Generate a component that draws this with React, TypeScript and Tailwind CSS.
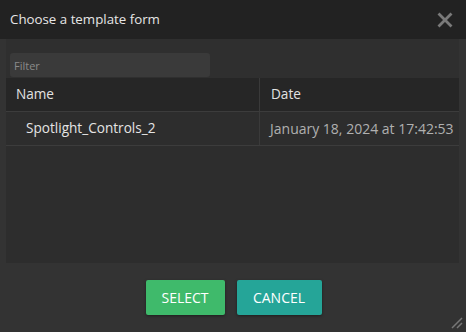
import { useState } from "react";

const rows = [{ name: "Spotlight_Controls_2", date: "January 18, 2024 at 17:42:53" }];

const App = () => {
  const [filter, setFilter] = useState("");
  return (
    <div className="w-[466px] h-[332px] bg-[#333333] flex flex-col font-['Open_Sans',sans-serif] text-[13px] text-[#dddddd] relative overflow-hidden">
      <div className="h-[39px] bg-[#222222] flex items-center justify-between pl-[10px] pr-[13px] shrink-0">
        <span className="text-[#e6e6e6] text-[13.3px]">Choose a template form</span>
        <svg width="16" height="16" viewBox="0 0 16 16" className="text-[#7a7a7a]">
          <path d="M2.5 2.5 L13.5 13.5 M13.5 2.5 L2.5 13.5" stroke="currentColor" strokeWidth="2.8" strokeLinecap="square" />
        </svg>
      </div>
      <div className="mx-[6px] mr-[7px] h-[224px] bg-[#2d2d2d] flex flex-col">
        <div className="bg-[#2f2f2f] pt-[14px] pb-[1px] pl-[4px]">
          <input
            value={filter}
            onChange={(e) => setFilter(e.target.value)}
            placeholder="Filter"
            className="w-[200px] h-[24px] bg-[#3a3a3a] rounded-[3px] px-[4px] text-[11px] text-[#ccc] placeholder:text-[#8a8a8a] outline-none"
          />
        </div>
        <div className="flex h-[34px] bg-[#262626] border-b border-[#3c3c3c] text-[13.6px]">
          <div className="w-[253px] flex items-center pl-[10px] text-[#e2e2e2]">Name</div>
          <div className="flex-1 flex items-center pl-[11px] border-l border-[#3a3a3a] text-[#e2e2e2]">Date</div>
        </div>
        {rows.map((r) => (
          <div key={r.name} className="flex h-[34px] border-b border-[#3c3c3c]">
            <div className="w-[253px] flex items-center pl-[20px] text-[#e4e4e4] text-[13.6px]">{r.name}</div>
            <div className="flex-1 flex items-center pl-[10px] border-l border-[#3a3a3a] text-[#b0b0b0] text-[14px] whitespace-nowrap">{r.date}</div>
          </div>
        ))}
      </div>
      <div className="flex justify-center gap-[12px] pt-[17px] pl-[1px]">
        <button className="w-[79px] h-[35px] rounded-[2px] bg-[#3fba6b] text-white text-[14px] shadow-[0_1px_3px_rgba(0,0,0,0.4)]">
          SELECT
        </button>
        <button className="w-[85px] h-[35px] rounded-[2px] bg-[#25a598] text-white text-[14px] shadow-[0_1px_3px_rgba(0,0,0,0.4)]">
          CANCEL
        </button>
      </div>
      <svg width="14" height="14" viewBox="0 0 14 14" className="absolute right-[3px] bottom-[3px] text-[#777]">
        <path d="M13 3 L3 13 M13 8 L8 13" stroke="currentColor" strokeWidth="1.5" />
      </svg>
    </div>
  );
};

export default App;
